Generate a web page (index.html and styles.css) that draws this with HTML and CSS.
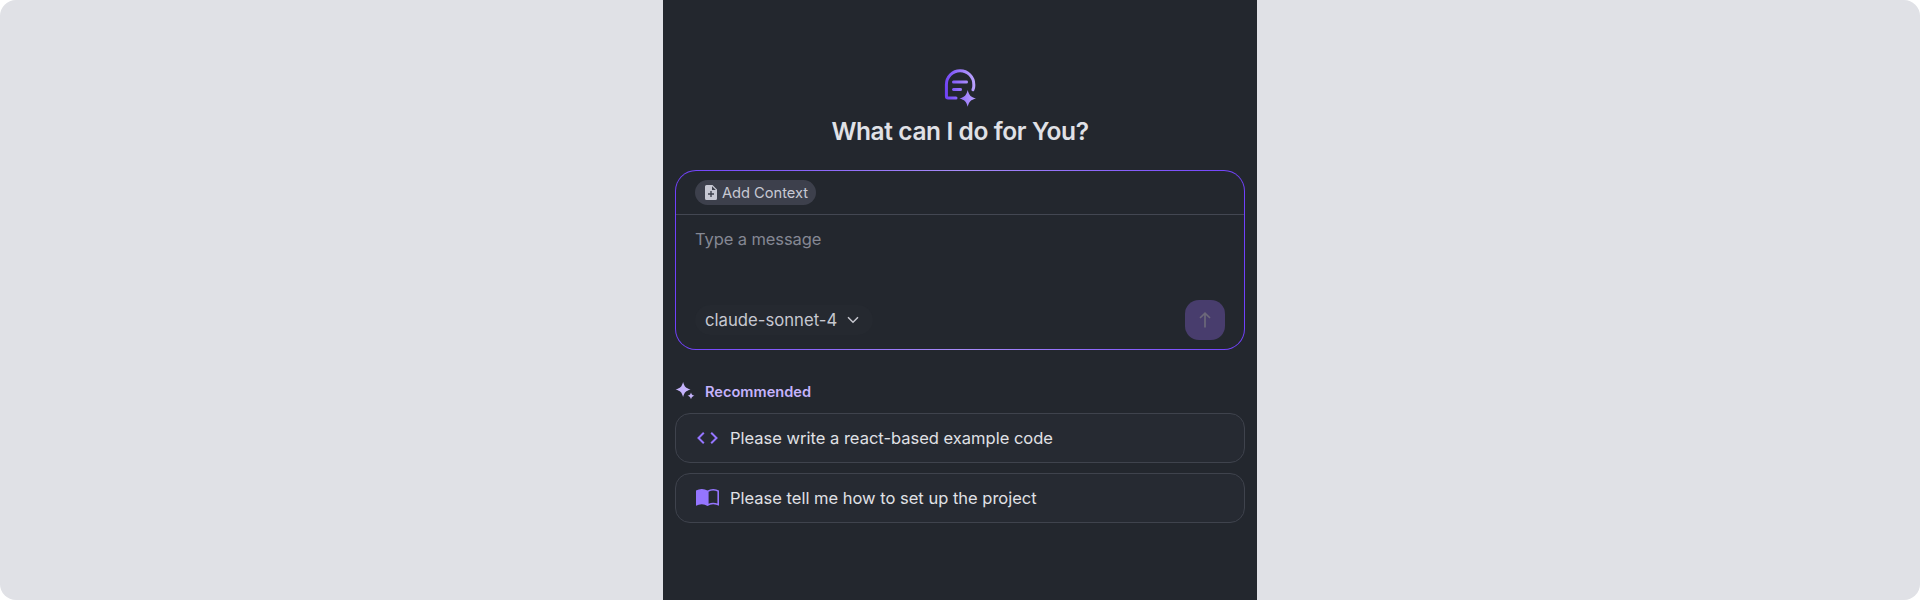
FILE: index.html
```html
<!DOCTYPE html>
<html lang="en">
<head>
<meta charset="utf-8">
<title>Assistant</title>
<link rel="stylesheet" href="styles.css">
</head>
<body>
<div class="stage">
  <main class="panel">
    <svg class="logo" width="32" height="38" viewBox="0 0 32 38" fill="none">
      <defs>
        <linearGradient id="logo-fill" gradientUnits="userSpaceOnUse" x1="0" y1="20" x2="32" y2="17">
          <stop offset="0" stop-color="#6d3ff5"/>
          <stop offset="1" stop-color="#bda6ff"/>
        </linearGradient>
      </defs>
      <g stroke="url(#logo-fill)" stroke-width="3" stroke-linecap="round" stroke-linejoin="round">
        <path d="M12 30H4.100Q2.400 30 2.400 28.200V16.500A13.700 13.700 0 0 1 29.800 16.500V18Q29.800 20 28.900 21.700"/>
        <path d="M9.500 14.010L22.500 14M9.500 21.510L16.500 21.500"/>
      </g>
      <path fill="url(#logo-fill)" d="M23.700 22C25 27.200 26.700 29.100 32 30.400C26.700 31.700 25 33.600 23.700 38.800C22.400 33.600 20.700 31.700 15.400 30.400C20.700 29.100 22.400 27.200 23.700 22Z"/>
    </svg>
    <h1 class="title">What can I do for You?</h1>

    <section class="composer">
      <div class="context-bar">
        <button class="context-chip">
          <svg width="12" height="15" viewBox="0 0 12 15"><path fill="currentColor" fill-rule="evenodd" d="M1.500 0H7.500L12 4.500V13.500Q12 15 10.500 15H1.500Q0 15 0 13.500V1.500Q0 0 1.500 0ZM7 1.200V5H10.800ZM5.300 6V8.300H3V9.700H5.300V12H6.700V9.700H9V8.300H6.700V6Z"/></svg>
          <span>Add Context</span>
        </button>
      </div>
      <div class="message">Type a message</div>
      <div class="actions">
        <button class="model">
          <span>claude-sonnet-4</span>
          <svg width="12" height="8" viewBox="0 0 12 8" fill="none" stroke="currentColor" stroke-width="1.500"><path d="M1 1.200L6 6.200L11 1.200"/></svg>
        </button>
        <button class="send" aria-label="Send">
          <svg width="12" height="16" viewBox="0 0 12 16" fill="none" stroke="currentColor" stroke-width="1.700"><path d="M6 15.500V1.500M1 6L6 1.200L11 6"/></svg>
        </button>
      </div>
    </section>

    <h2 class="section-label">
      <svg width="20" height="18" viewBox="0 0 20 18" fill="currentColor"><path d="M8.100 0C9.700 5.100 10.500 5.900 15.600 7.500C10.500 9.100 9.700 9.900 8.100 15C6.500 9.900 5.700 9.100 .6 7.500C5.700 5.900 6.500 5.100 8.100 0Z"/><path d="M16 10.400C16.900 12.700 17.100 12.900 19.400 13.800C17.100 14.700 16.900 14.900 16 17.200C15.100 14.900 14.900 14.700 12.600 13.800C14.900 12.900 15.100 12.700 16 10.400Z"/></svg>
      <span>Recommended</span>
    </h2>
    <div class="suggestions">
      <button class="suggestion">
        <svg width="24" height="18" viewBox="0 0 24 18" fill="none" stroke="currentColor" stroke-width="2"><path d="M8.800 3.700L3.500 9L8.800 14.300M16.200 3.700L21.500 9L16.200 14.300"/></svg>
        <span>Please write a react-based example code</span>
      </button>
      <button class="suggestion">
        <svg width="24" height="18" viewBox="0 0 24 18" fill="currentColor"><path fill-rule="evenodd" d="M12.500 1.500Q10 0 6.800 0Q3.500 0 1 1.500V16.800Q3.500 15.300 6.800 15.300Q10 15.300 12.500 17Q15 15.300 18.200 15.300Q21.500 15.300 24 16.800V1.500Q21.500 0 18.200 0Q15 0 12.500 1.500ZM13.600 2.700Q15.800 1.600 18.200 1.600Q20.500 1.600 22.400 2.400V14.400Q20.500 13.800 18.200 13.800Q15.800 13.800 13.600 14.800Z"/></svg>
        <span>Please tell me how to set up the project</span>
      </button>
    </div>
  </main>
</div>
</body>
</html>
```
FILE: styles.css
```css
* { box-sizing: border-box; }

body {
  margin: 0;
  background: #fff;
  font-family: Inter, "Liberation Sans", sans-serif;
}

button {
  font: inherit;
  border: 0;
  margin: 0;
  text-align: left;
}

svg { display: block; flex: none; }

.stage {
  display: flex;
  justify-content: center;
  height: 600px;
  background: #e0e1e6;
  border-radius: 16px;
  overflow: hidden;
}

.panel {
  display: flex;
  flex-direction: column;
  width: 594px;
  padding: 68px 12px 0;
  background: #23272e;
}

.logo { align-self: center; overflow: visible; }

.title {
  margin: 9px 0 23px;
  font-size: 24.500px;
  font-weight: 600;
  line-height: 32px;
  letter-spacing: -0.4px;
  text-align: center;
  color: #e0e1e6;
}

.composer {
  display: flex;
  flex-direction: column;
  height: 180px;
  border: 1px solid transparent;
  border-radius: 21px;
  background: linear-gradient(#23272e, #23272e) padding-box,
    linear-gradient(90deg, #7040fb, #a88df8 50%, #7040fb) border-box;
}

.context-bar {
  height: 44px;
  padding: 9px 19px 0;
  border-bottom: 1px solid #434752;
}

.context-chip {
  display: flex;
  align-items: center;
  gap: 5px;
  width: 121px;
  height: 25px;
  padding: 0 0 0 10px;
  border-radius: 13px;
  background: #3d404c;
  color: #c7c8d3;
  font-size: 14.700px;
  letter-spacing: -0.04px;
  white-space: nowrap;
}

.message {
  flex: 1;
  padding: 12px 19px;
  font-size: 16.500px;
  line-height: 24px;
  letter-spacing: -0.1px;
  color: #858894;
}

.actions {
  display: flex;
  align-items: center;
  justify-content: space-between;
  padding: 0 19px 9px;
}

.model {
  display: flex;
  align-items: center;
  gap: 10px;
  height: 30px;
  padding: 0 14px 0 10px;
  border-radius: 15px;
  background: #252930;
  color: #c7c8d0;
  font-size: 16.700px;
}

.send {
  display: grid;
  place-items: center;
  width: 40px;
  height: 40px;
  padding: 0;
  border-radius: 14px;
  background: #483d6d;
  color: #6c6879;
}

.section-label {
  display: flex;
  align-items: center;
  gap: 10px;
  margin: 31px 0 12px;
  height: 20px;
  font-size: 14.600px;
  font-weight: 600;
  line-height: 18px;
  color: #c5b3fc;
}

.section-label span { padding-top: 2px; }

.suggestions {
  display: flex;
  flex-direction: column;
  gap: 10px;
}

.suggestion {
  display: flex;
  align-items: center;
  gap: 11px;
  height: 50px;
  padding: 0 19px;
  border: 1px solid #3f434d;
  border-radius: 15px;
  background: #262a32;
  color: #e0e1e6;
  font-size: 16.500px;
}

.suggestion svg { color: #9575ff; }
```
